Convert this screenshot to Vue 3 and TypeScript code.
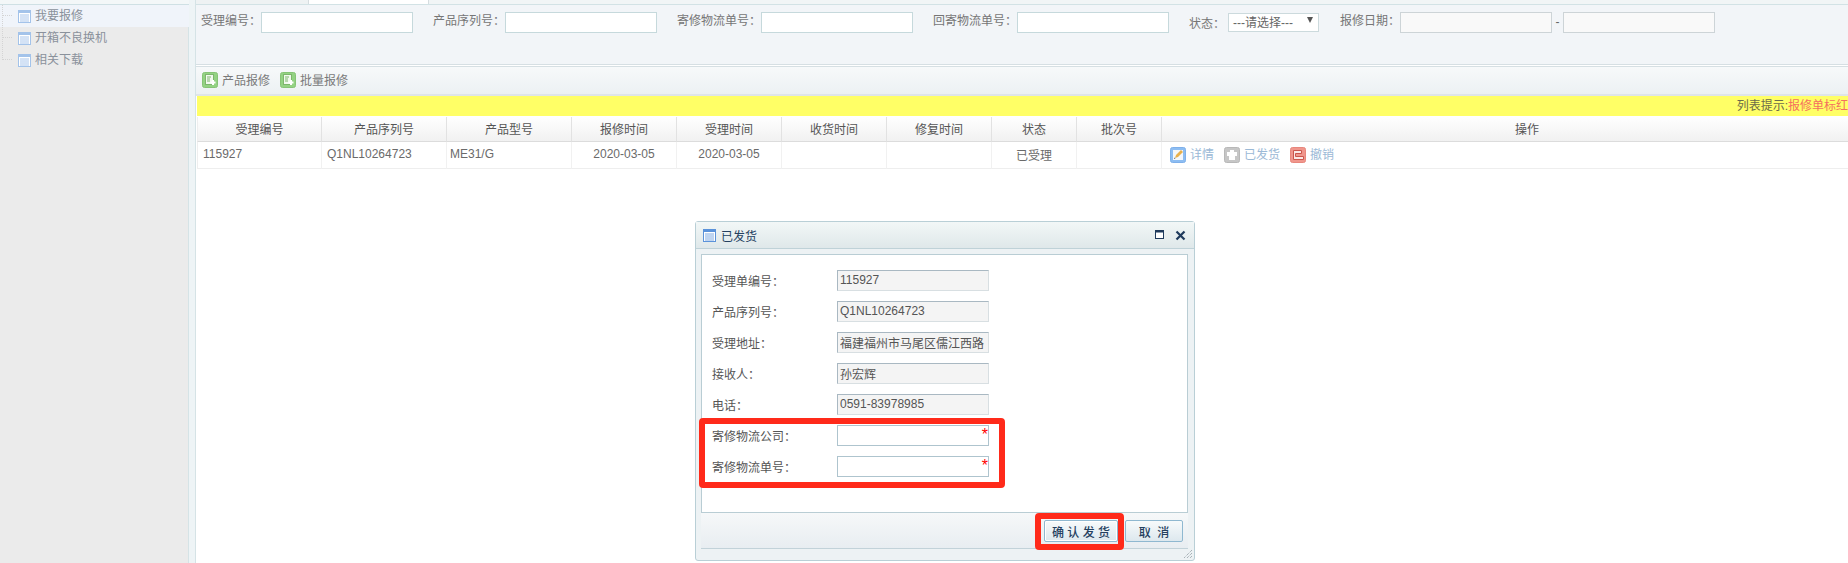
<script setup lang="ts">
const colon = '\uFF1A'
const menu = [
  { name: '我要报修', active: true },
  { name: '开箱不良换机', active: false },
  { name: '相关下载', active: false },
]
const filters = ['受理编号', '产品序列号', '寄修物流单号', '回寄物流单号']
const columns = ['受理编号', '产品序列号', '产品型号', '报修时间', '受理时间', '收货时间', '修复时间', '状态', '批次号', '操作']
const widths = [125, 125, 125, 105, 105, 105, 105, 85, 85, 731]
const infoRows = [
  { label: '受理单编号', value: '115927' },
  { label: '产品序列号', value: 'Q1NL10264723' },
  { label: '受理地址', value: '福建福州市马尾区儒江西路' },
  { label: '接收人', value: '孙宏辉' },
  { label: '电话', value: '0591-83978985' },
]
const requiredRows = ['寄修物流公司', '寄修物流单号']
</script>

<template>
  <div class="page">
    <aside class="side">
      <div class="side-top"></div>
      <ul class="tree">
        <li v-for="m in menu" :key="m.name" class="tree-item" :class="{ on: m.active }">
          <span class="dots"></span>
          <svg class="tbl" width="13" height="13" viewBox="0 0 13 13">
            <rect x="0.5" y="0.5" width="12" height="12" fill="#fff" stroke="#a3c3ea" />
            <rect x="1" y="1" width="11" height="2" fill="#a3c3ea" />
            <path d="M2 5h9M2 7h9M2 9h9M2 11h9" stroke="#a9c6ec" stroke-width="1" />
          </svg>
          <span class="tree-text">{{ m.name }}</span>
        </li>
      </ul>
    </aside>

    <main class="main">
      <div class="wide">
        <div class="tabs">
          <span class="tab"></span>
          <span class="tab-on"></span>
          <span class="tab rest"></span>
        </div>

        <form class="search" @submit.prevent>
          <template v-for="f in filters" :key="f">
            <label class="s-label">{{ f + colon }}</label>
            <input class="s-input" type="text" />
          </template>
          <label class="s-label state">{{ '状态' + colon }}</label>
          <div class="s-select">---请选择---</div>
          <label class="s-label date">{{ '报修日期' + colon }}</label>
          <input class="s-input d" type="text" />
          <span class="dash">-</span>
          <input class="s-input d" type="text" />
        </form>

        <div class="toolbar">
          <button class="tool" type="button">
            <svg width="16" height="16" viewBox="0 0 16 16">
              <rect x="0.5" y="0.5" width="15" height="15" rx="2" fill="#93d283" stroke="#86c476" />
              <rect x="3.500" y="2.500" width="8" height="10" fill="#f1f9ee" stroke="#7db56d" />
              <path d="M5 5h4M5 7h3M5 9h3" stroke="#7db56d" />
              <path d="M8.500 10.500h5M11 8v5" stroke="#fff" stroke-width="2" />
            </svg>
            产品报修
          </button>
          <button class="tool" type="button">
            <svg width="16" height="16" viewBox="0 0 16 16">
              <rect x="0.5" y="0.5" width="15" height="15" rx="2" fill="#93d283" stroke="#86c476" />
              <rect x="3.500" y="2.500" width="8" height="10" fill="#f1f9ee" stroke="#7db56d" />
              <path d="M5 5h4M5 7h3M5 9h3" stroke="#7db56d" />
              <path d="M8.500 10.500h5M11 8v5" stroke="#fff" stroke-width="2" />
            </svg>
            批量报修
          </button>
        </div>

        <div class="notice">列表提示:<span class="hot">报修单标红</span></div>

        <table class="grid">
          <colgroup>
            <col v-for="(w, i) in widths" :key="i" :style="{ width: w + 'px' }" />
          </colgroup>
          <thead>
            <tr>
              <th v-for="c in columns" :key="c">{{ c }}</th>
            </tr>
          </thead>
          <tbody>
            <tr>
              <td class="left">115927</td>
              <td class="left">Q1NL10264723</td>
              <td class="left third">ME31/G</td>
              <td>2020-03-05</td>
              <td>2020-03-05</td>
              <td></td>
              <td></td>
              <td>已受理</td>
              <td></td>
              <td class="ops">
                <a class="op">
                  <svg width="16" height="16" viewBox="0 0 16 16">
                    <rect x="0.5" y="0.5" width="15" height="15" rx="2" fill="#8dbdf2" stroke="#7fb0ea" />
                    <rect x="3" y="3" width="10" height="10" fill="#f4f7fb" />
                    <path d="M5 11l1-3 5-5 2 2-5 5z" fill="#e8b04c" />
                    <path d="M4 12l1.500-.5-1-1z" fill="#555" />
                  </svg>
                  详情
                </a>
                <a class="op">
                  <svg width="16" height="16" viewBox="0 0 16 16">
                    <rect x="0.5" y="0.5" width="15" height="15" rx="2" fill="#c6c6c6" stroke="#b8b8b8" />
                    <path d="M6 3h4v2h3v4h-2v4H5V9H3V5h3z" fill="#fff" />
                  </svg>
                  已发货
                </a>
                <a class="op">
                  <svg width="16" height="16" viewBox="0 0 16 16">
                    <rect x="0.5" y="0.5" width="15" height="15" rx="2" fill="#f0968c" stroke="#e8877d" />
                    <path d="M3.500 3.500h8v3h-6v3h8v3h-10z" fill="#fbe9e6" stroke="#c9574d" stroke-width="1" />
                  </svg>
                  撤销
                </a>
              </td>
            </tr>
          </tbody>
        </table>
      </div>
    </main>

    <section class="dialog">
      <header class="d-head">
        <svg width="13" height="13" viewBox="0 0 13 13">
          <rect x="0.5" y="0.5" width="12" height="12" fill="#fff" stroke="#5b93da" />
          <rect x="1" y="1" width="11" height="2" fill="#5b93da" />
          <path d="M2 5h9M2 7h9M2 9h9M2 11h9" stroke="#7eaae2" stroke-width="1" />
        </svg>
        <span class="d-title">已发货</span>
        <span class="d-tools">
          <svg width="10" height="10" viewBox="0 0 10 10">
            <rect x="0.500" y="0.500" width="8" height="8" fill="#fff" stroke="#1f3a5c" />
            <rect x="0" y="0" width="9" height="2.500" fill="#1f3a5c" />
          </svg>
          <svg width="11" height="11" viewBox="0 0 11 11">
            <path d="M1.500 1.500l8 8M9.500 1.500l-8 8" stroke="#1f3a5c" stroke-width="2.200" fill="none" />
          </svg>
        </span>
      </header>

      <div class="d-panel">
        <div v-for="r in infoRows" :key="r.label" class="d-row">
          <label class="d-label">{{ r.label + colon }}</label>
          <input class="d-input ro" type="text" readonly :value="r.value" />
        </div>
        <div v-for="r in requiredRows" :key="r" class="d-row">
          <label class="d-label">{{ r + colon }}</label>
          <span class="req">
            <input class="d-input" type="text" />
            <i class="star">*</i>
          </span>
        </div>
      </div>

      <footer class="d-foot">
        <button class="btn focus" type="button">确 认 发 货</button>
        <button class="btn" type="button">取&nbsp;&nbsp;消</button>
      </footer>

      <div class="d-grip">
        <svg width="10" height="10" viewBox="0 0 10 10">
          <path d="M9 1L1 9M9 4L4 9M9 7L7 9" stroke="#8a979e" stroke-width="1" stroke-dasharray="1 1" fill="none" />
        </svg>
      </div>

      <div class="mark mark-form"></div>
      <div class="mark mark-btn"></div>
    </section>
  </div>
</template>

<style scoped>
.page {
  position: relative;
  display: flex;
  width: 1848px;
  height: 563px;
  overflow: hidden;
  background: #fff;
  font-family: "Liberation Sans", "Noto Sans CJK SC", sans-serif;
  font-size: 12px;
  color: #666;
}
.side {
  flex: none;
  box-sizing: border-box;
  width: 196px;
  height: 563px;
  background: #ebebeb;
  border-right: 1px solid #d5e3e6;
  box-shadow: inset -6px 0 0 #eef4f6, inset -7px 0 0 #d5e3e6;
}
.side-top {
  height: 4px;
  margin-right: 6px;
  background: #f3f7f8;
  border-bottom: 1px solid #cfe0e4;
}
.tree {
  position: relative;
  margin: 0 6px 0 0;
  padding: 0;
  list-style: none;
}
.tree::before {
  content: "";
  position: absolute;
  left: 2px;
  top: 0;
  height: 55px;
  border-left: 1px dotted #d4d4d4;
  z-index: 1;
}
.tree-item {
  position: relative;
  display: flex;
  align-items: center;
  height: 22px;
  padding-left: 18px;
  color: #8a9199;
}
.tree-item.on {
  background: #f0f4fa;
}
.dots {
  position: absolute;
  left: 2px;
  top: 10px;
  width: 10px;
  border-top: 1px dotted #d4d4d4;
}
.tbl {
  flex: none;
  margin-right: 4px;
}
.tree-text {
  line-height: 22px;
  color: #8a919b;
}
.main {
  flex: none;
  width: 1652px;
  overflow: hidden;
}
.wide {
  width: 1696px;
}
.tabs {
  display: flex;
  height: 4px;
  background: #fff;
  border-bottom: 1px solid #d2e2e5;
}
.tab {
  width: 112px;
  background: #eef2f3;
  border-right: 1px solid #d6dde0;
}
.tab-on {
  width: 119px;
  background: #fff;
}
.tab.rest {
  flex: 1;
  border-left: 1px solid #d6dde0;
  border-right: 0;
  background: #f1f5f6;
}
.search {
  box-sizing: border-box;
  display: flex;
  align-items: flex-start;
  height: 60px;
  margin: 0;
  padding: 7px 0 0 5px;
  background: #f2f5f8;
  border-bottom: 1px solid #d6dfe3;
}
.s-label {
  flex: none;
  line-height: 19px;
  color: #767676;
}
.s-label.state {
  width: 39px;
  margin-top: 3px;
}
.s-label.date {
  width: 60px;
}
.s-input {
  flex: none;
  box-sizing: border-box;
  width: 152px;
  height: 21px;
  margin: 0 20px 0 0;
  padding: 0 3px;
  background: #fff;
  border: 1px solid #c6d9dc;
  outline: 0;
}
.s-input.d {
  margin: 0;
  background: #f9f9f9;
  border-color: #cdd4d7;
}
.dash {
  flex: none;
  width: 11px;
  line-height: 21px;
  text-align: center;
  color: #666;
}
.s-select {
  position: relative;
  flex: none;
  box-sizing: border-box;
  width: 91px;
  height: 19px;
  margin: 1px 21px 0 0;
  padding-left: 4px;
  line-height: 19px;
  white-space: nowrap;
  color: #666;
  background: #fff;
  border: 1px solid #ccdadd;
}
.s-select::after {
  content: "";
  position: absolute;
  right: 5px;
  top: 3px;
  border-left: 3.500px solid transparent;
  border-right: 3.500px solid transparent;
  border-top: 6px solid #555;
}
.toolbar {
  box-sizing: border-box;
  display: flex;
  align-items: center;
  gap: 10px;
  height: 30px;
  margin-top: 1px;
  padding: 0 0 2px 6px;
  background: linear-gradient(#f7f9fa, #ecf1f3);
  border-top: 1px solid #d6dfe3;
  border-bottom: 2px solid #dfe5e8;
}
.tool {
  display: inline-flex;
  align-items: center;
  gap: 4px;
  padding: 0;
  border: 0;
  background: none;
  font: inherit;
  color: #7a7a7a;
}
.notice {
  box-sizing: border-box;
  height: 20px;
  padding-right: 44px;
  margin-left: 1px;
  line-height: 20px;
  text-align: right;
  white-space: nowrap;
  background: #ffff66;
  color: #6b6b4a;
}
.hot {
  color: #f4705f;
}
.grid {
  width: 1696px;
  margin: 1px 0 0 1px;
  table-layout: fixed;
  border-collapse: separate;
  border-spacing: 0;
}
.grid th {
  box-sizing: border-box;
  height: 25px;
  padding: 0 0 2px;
  font-weight: 400;
  color: #555;
  text-align: center;
  background: linear-gradient(#fff, #f1f1f1);
  border-right: 1px solid #e2e2e2;
  border-bottom: 1px solid #dcdcdc;
}
.grid td {
  box-sizing: border-box;
  height: 27px;
  padding: 0 0 2px;
  color: #6a6a6a;
  text-align: center;
  background: #fff;
  border-right: 1px solid #f1f1f1;
  border-bottom: 1px solid #eeeeee;
}
.grid td:first-child,
.grid th:first-child {
  border-left: 1px solid #eeeeee;
}
.grid td.left {
  padding-left: 5px;
  text-align: left;
}
.grid td.third {
  padding-left: 3px;
}
.grid td.ops {
  padding: 0 0 0 8px;
  text-align: left;
}
.op {
  display: inline-flex;
  align-items: center;
  gap: 4px;
  margin-right: 10px;
  vertical-align: middle;
  line-height: 16px;
  color: #9bb9d6;
}
.dialog {
  position: absolute;
  left: 695px;
  top: 221px;
  box-sizing: border-box;
  display: flex;
  flex-direction: column;
  width: 500px;
  height: 340px;
  background: #edf2f4;
  border: 1px solid #b9cfd6;
  border-radius: 3px;
}
.d-head {
  flex: none;
  box-sizing: border-box;
  display: flex;
  align-items: center;
  height: 27px;
  padding: 0 8px 0 7px;
  background: linear-gradient(#f2f7f7, #dfe8ea);
  border-bottom: 1px solid #bfd2d8;
}
.d-title {
  margin-left: 5px;
  color: #24405f;
}
.d-tools {
  display: flex;
  align-items: center;
  gap: 10px;
  margin-left: auto;
}
.d-panel {
  flex: none;
  box-sizing: border-box;
  display: flex;
  flex-direction: column;
  gap: 10px;
  height: 259px;
  margin: 5px 6px 0 5px;
  padding: 15px 0 0 10px;
  background: #fff;
  border: 1px solid #b9cdd4;
}
.d-row {
  display: flex;
  align-items: center;
  height: 21px;
}
.d-label {
  flex: none;
  width: 125px;
  color: #555;
}
.d-input {
  box-sizing: border-box;
  display: block;
  width: 152px;
  height: 21px;
  padding: 0 2px 1px;
  font: inherit;
  color: #555;
  background: #fff;
  border: 1px solid #aec4ce;
  outline: 0;
}
.d-input.ro {
  background: #f4f4f4;
  border-color: #a9b8c2 #d8dfe2 #d8dfe2 #a9b8c2;
}
.req {
  position: relative;
  display: block;
}
.star {
  position: absolute;
  right: 1px;
  top: 2px;
  font-style: normal;
  font-size: 16px;
  line-height: 16px;
  color: #f00;
}
.d-foot {
  flex: none;
  box-sizing: border-box;
  display: flex;
  justify-content: flex-end;
  gap: 7px;
  height: 36px;
  margin: 0 6px 0 5px;
  padding: 7px 5px 0 0;
  background: linear-gradient(#f6f8f9, #e8edf1);
  border-bottom: 1px solid #c2d2d9;
}
.btn {
  box-sizing: border-box;
  width: 58px;
  height: 22px;
  padding: 0;
  font: inherit;
  font-weight: 500;
  color: #24405f;
  background: linear-gradient(#f7fafb, #dde8ee);
  border: 1px solid #8fb8d0;
  border-radius: 2px;
}
.btn.focus {
  width: 74px;
  box-shadow: inset 0 0 0 1px #fff;
}
.d-grip {
  display: flex;
  flex: 1;
  justify-content: flex-end;
  align-items: flex-end;
  padding: 0 1px 1px 0;
}
.mark {
  position: absolute;
  box-sizing: border-box;
  border: 6px solid #ff2a1a;
  border-radius: 4px;
}
.mark-form {
  left: 3px;
  top: 196px;
  width: 306px;
  height: 70px;
}
.mark-btn {
  left: 339px;
  top: 291px;
  width: 89px;
  height: 37px;
}
</style>
